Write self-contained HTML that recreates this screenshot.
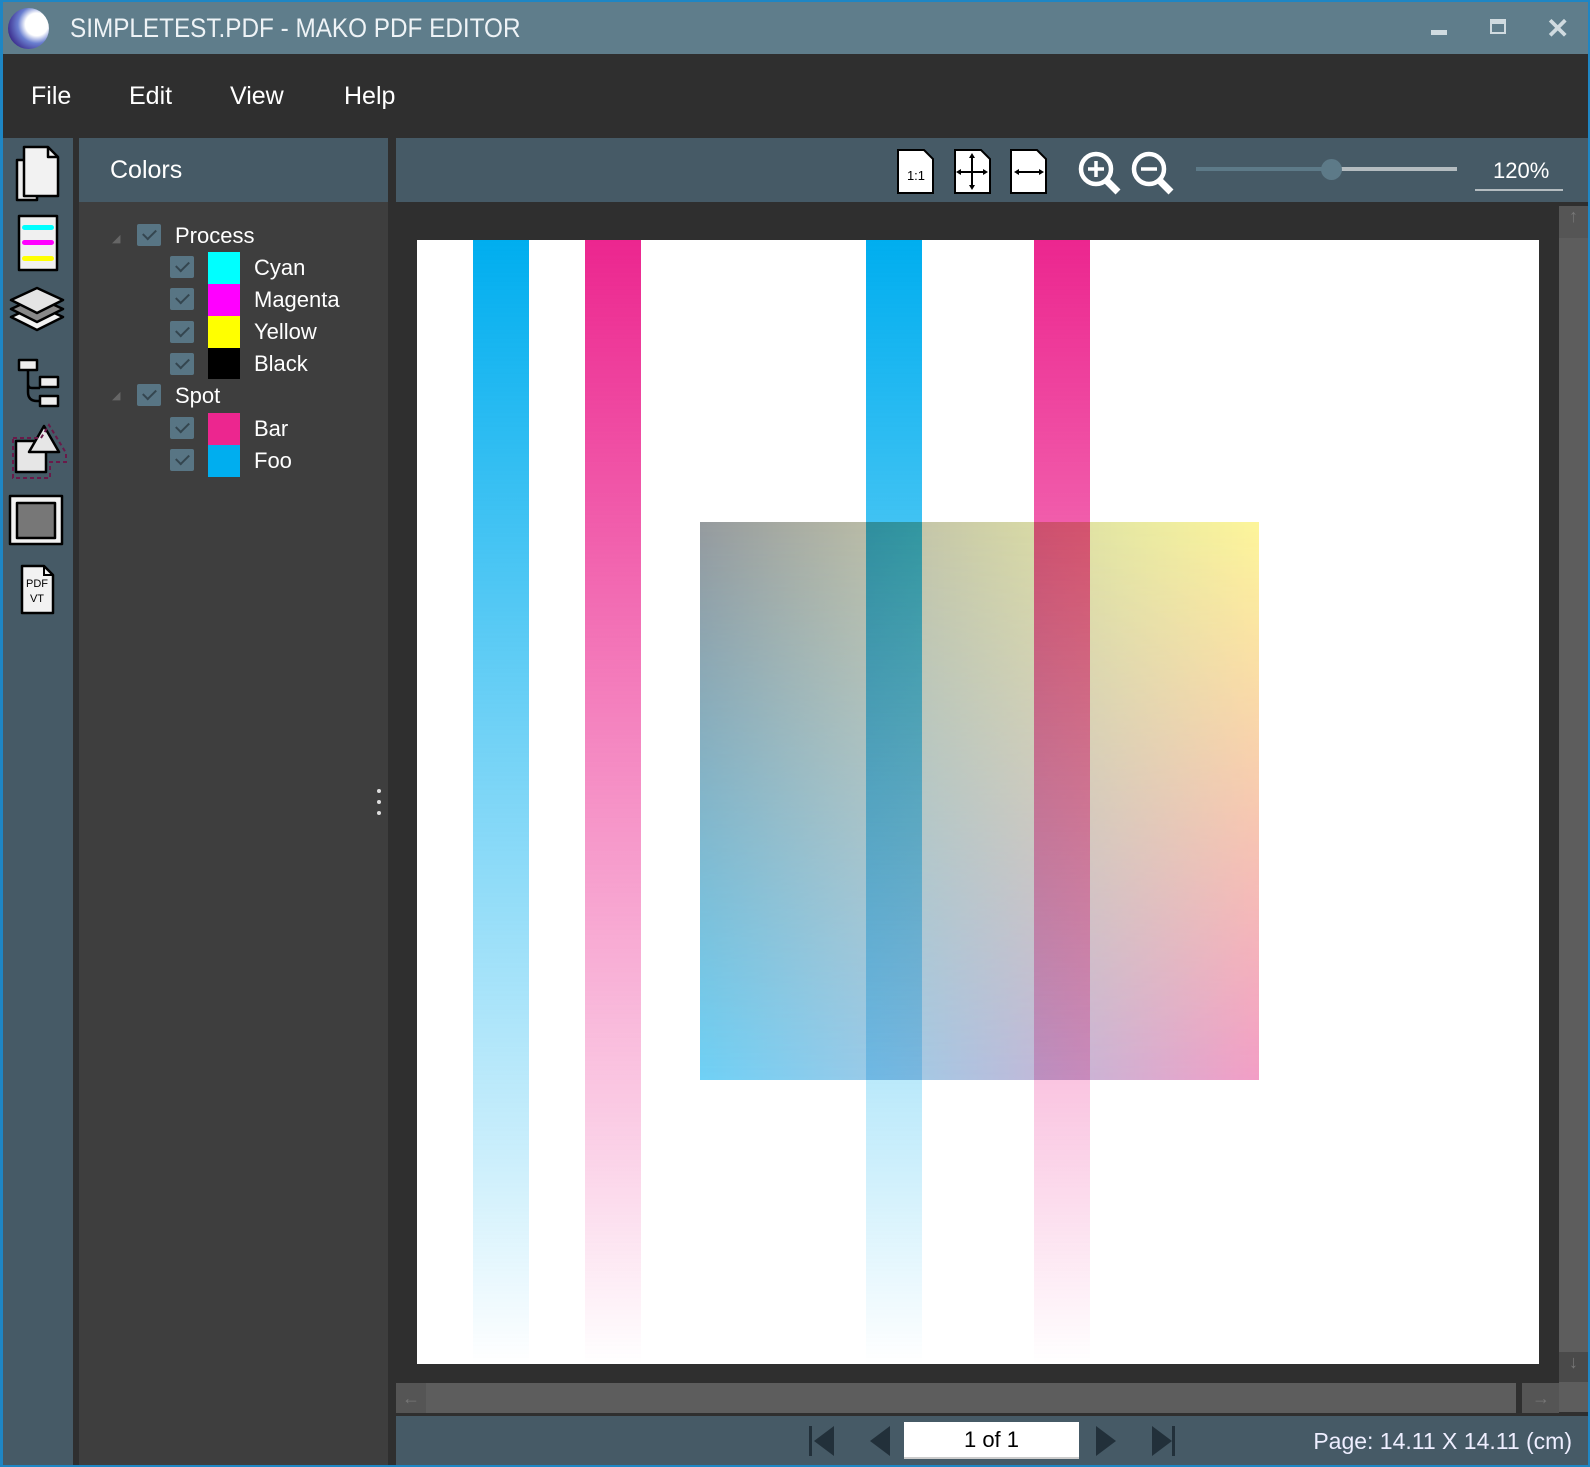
<!DOCTYPE html>
<html><head><meta charset="utf-8"><style>
*{margin:0;padding:0;box-sizing:border-box}
body{width:1590px;height:1467px;overflow:hidden;background:#2f2f2f;font-family:"Liberation Sans",sans-serif;position:relative}
.a{position:absolute}
.t{color:#fff;font-size:22px;white-space:nowrap}
.cb{position:absolute;width:24px;height:22px;background:#587584;border-radius:2px}
.cb:after{content:"";position:absolute;left:6px;width:11px;height:6px;border-left:2px solid #34464f;border-bottom:2px solid #34464f;transform:rotate(-45deg);transform-origin:center;top:5px}
.sw{position:absolute;left:208px;width:32px;height:32px}
</style></head><body>
<div class="a" style="left:0;top:0;width:1590px;height:2px;background:#1e86c4"></div>
<div class="a" style="left:0;top:0;width:3px;height:1467px;background:#1e86c4"></div>
<div class="a" style="right:0;top:0;width:2px;height:1467px;background:#1e86c4"></div>
<div class="a" style="left:0;bottom:0;width:1590px;height:2px;background:#1e86c4"></div>
<div class="a" style="left:3px;top:2px;width:1585px;height:52px;background:#5f7d8b"></div>
<div class="a" style="left:8px;top:8px;width:41px;height:41px;border-radius:50%;background:radial-gradient(circle at 70% 40%,#fff 0 30%,#6a7fd0 50%,#3a2a8a 80%,#5a4ab0)"></div>
<div class="a" style="left:70px;top:13px;color:#eef3f6;font-size:27px;white-space:nowrap;transform:scaleX(0.9);transform-origin:left">SIMPLETEST.PDF - MAKO PDF EDITOR</div>
<div class="a" style="left:1431px;top:30px;width:16px;height:5px;background:#d0dbe0"></div>
<div class="a" style="left:1490px;top:19px;width:16px;height:15px;border:2px solid #d0dbe0;border-top-width:5px"></div>
<div class="a" style="left:1546px;top:12px;color:#d0dbe0;font-size:28px;font-weight:bold">✕</div>
<div class="a t" style="left:31px;top:82px;font-size:25px">File</div>
<div class="a t" style="left:129px;top:82px;font-size:25px">Edit</div>
<div class="a t" style="left:230px;top:82px;font-size:25px">View</div>
<div class="a t" style="left:344px;top:82px;font-size:25px">Help</div>
<div class="a" style="left:3px;top:138px;width:70px;height:1327px;background:#465a66"></div>
<svg class="a" style="left:3px;top:138px" width="70" height="490" viewBox="3 138 70 490">
<g stroke="#000" stroke-width="2.5" stroke-linejoin="round">
<path d="M17 160 h20 v40 h-20z" fill="#eee"/>
<path d="M24 147 h24 l10 10 v39 h-34z" fill="#f2f2f2"/>
<path d="M48 147 v10 h10" fill="none"/>
<rect x="19" y="216" width="38" height="54" fill="#f0f0f0"/>
<path d="M37 305 l26 12 -26 13 -26 -13z" fill="#f2f2f2"/>
<path d="M37 297 l26 12 -26 13 -26 -13z" fill="#888"/>
<path d="M37 288 l26 12 -26 13 -26 -13z" fill="#e4e4e4"/>
<rect x="19" y="360" width="18" height="10" fill="#eee"/>
<rect x="40" y="377" width="18" height="10" fill="#eee"/>
<rect x="40" y="396" width="18" height="10" fill="#eee"/>
<path d="M28 370 v14 q0 4 4 4 h8 M28 384 v8 q0 9 9 9 h3" fill="none"/>
<rect x="16" y="441" width="30" height="31" fill="#e6e6e6"/>
<path d="M44 426 l15 26 h-30z" fill="#e6e6e6"/>
<rect x="10" y="496" width="52" height="48" fill="#f2f2f2"/>
<rect x="17" y="503" width="38" height="35" fill="#777"/>
<path d="M22 566 h22 l9 9 v38 h-31z" fill="#f2f2f2"/>
</g>
<g stroke="#000" stroke-width="2"><path d="M44 566 v9 h9" fill="none"/></g>
<rect x="22" y="225" width="32" height="5" rx="2.5" fill="#0ff"/>
<rect x="22" y="240" width="32" height="5" rx="2.5" fill="#f0f"/>
<rect x="22" y="256" width="32" height="5" rx="2.5" fill="#ff0"/>
<path d="M13 438 h28 l8 -13 l17 28 v9 h-16 v16 h-37z" fill="none" stroke="#6a1a4a" stroke-width="2" stroke-dasharray="4 3"/>
<text x="37" y="587" font-size="11" text-anchor="middle" font-family="Liberation Sans">PDF</text>
<text x="37" y="602" font-size="11" text-anchor="middle" font-family="Liberation Sans">VT</text>
</svg>
<div class="a" style="left:79px;top:138px;width:309px;height:1327px;background:#3e3e3e"></div>
<div class="a" style="left:79px;top:138px;width:309px;height:64px;background:#465a66"></div>
<div class="a t" style="left:110px;top:156px;font-size:25px">Colors</div>
<div class="a" style="left:112px;top:232px;color:#666;font-size:11px">◢</div>
<div class="a" style="left:112px;top:389px;color:#666;font-size:11px">◢</div>
<div class="cb" style="left:137px;top:224px"></div>
<div class="cb" style="left:137px;top:384px"></div>
<div class="cb" style="left:170px;top:256px"></div>
<div class="cb" style="left:170px;top:288px"></div>
<div class="cb" style="left:170px;top:321px"></div>
<div class="cb" style="left:170px;top:353px"></div>
<div class="cb" style="left:170px;top:417px"></div>
<div class="cb" style="left:170px;top:449px"></div>
<div class="sw" style="top:252px;background:#0ff"></div>
<div class="sw" style="top:284px;background:#f0f"></div>
<div class="sw" style="top:316px;background:#ff0"></div>
<div class="sw" style="top:348px;background:#000;height:31px"></div>
<div class="sw" style="top:413px;background:#ec268f"></div>
<div class="sw" style="top:445px;background:#00aeef"></div>
<div class="a t" style="left:175px;top:223px">Process</div>
<div class="a t" style="left:254px;top:255px">Cyan</div>
<div class="a t" style="left:254px;top:287px">Magenta</div>
<div class="a t" style="left:254px;top:319px">Yellow</div>
<div class="a t" style="left:254px;top:351px">Black</div>
<div class="a t" style="left:175px;top:383px">Spot</div>
<div class="a t" style="left:254px;top:416px">Bar</div>
<div class="a t" style="left:254px;top:448px">Foo</div>
<div class="a" style="left:377px;top:789px;width:4px;height:4px;border-radius:2px;background:#ddd;box-shadow:0 11px #ddd,0 22px #ddd"></div>
<div class="a" style="left:396px;top:138px;width:1192px;height:64px;background:#465a66"></div>
<svg class="a" style="left:890px;top:140px" width="300" height="60" viewBox="890 140 300 60">
<g stroke="#000" stroke-width="2" fill="#fff">
<path d="M898 150 h26 l9 9 v34 h-35z"/><path d="M955 150 h26 l9 9 v34 h-35z"/><path d="M1011 150 h26 l9 9 v34 h-35z"/>
</g>
<text x="916" y="180" font-size="13" text-anchor="middle" font-family="Liberation Sans">1:1</text>
<g stroke="#000" stroke-width="2" fill="none">
<path d="M972 155 v33 M958 172 h28"/><path d="M1016 172 h26"/>
</g>
<g fill="#000"><path d="M972 153 l-3 5 h6z M972 190 l-3 -5 h6z M956 172 l5 -3 v6z M988 172 l-5 -3 v6z M1014 172 l5 -3 v6z M1044 172 l-5 -3 v6z"/></g>
<g stroke="#fff" fill="none" stroke-width="4.5">
<circle cx="1096" cy="169" r="15"/><circle cx="1149" cy="169" r="15"/>
</g>
<g stroke="#fff" stroke-width="7"><path d="M1107 181 l11 11 M1160 181 l11 11"/></g>
<g stroke="#fff" stroke-width="3.5"><path d="M1088 169 h16 M1096 161 v16 M1141 169 h16"/></g>
</svg>
<div class="a" style="left:1196px;top:167px;width:136px;height:4px;background:#5d7a88"></div>
<div class="a" style="left:1332px;top:167px;width:125px;height:4px;background:#b4bcc0"></div>
<div class="a" style="left:1321px;top:159px;width:21px;height:21px;border-radius:50%;background:#5d7a88"></div>
<div class="a t" style="left:1493px;top:158px;font-size:22px">120%</div>
<div class="a" style="left:1475px;top:189px;width:88px;height:2px;background:#b4bcc0"></div>
<div class="a" style="left:417px;top:240px;width:1122px;height:1124px;background:#fff;overflow:hidden">
 <div class="a" style="left:283px;top:282px;width:559px;height:558px;background:linear-gradient(to right,#6fd1f6,#a6c8e4 40%,#f39ec6)"></div>
 <div class="a" style="left:283px;top:282px;width:559px;height:558px;background:linear-gradient(to right,#959a9e,#c5c6a8 40%,#e6e8a2 75%,#fdf59a);-webkit-mask-image:linear-gradient(to bottom,#000 0%,rgba(0,0,0,.5) 50%,rgba(0,0,0,0) 100%);mask-image:linear-gradient(to bottom,#000 0%,rgba(0,0,0,.5) 50%,rgba(0,0,0,0) 100%)"></div>
 <div class="a" style="left:56px;top:0;width:56px;height:1124px;mix-blend-mode:multiply;background:linear-gradient(#00aeef,rgba(0,174,239,.55) 45%,rgba(0,174,239,.2) 82%,rgba(0,174,239,0) 100%)"></div>
 <div class="a" style="left:168px;top:0;width:56px;height:1124px;mix-blend-mode:multiply;background:linear-gradient(#ec268f,rgba(236,38,143,.55) 45%,rgba(236,38,143,.2) 82%,rgba(236,38,143,0) 100%)"></div>
 <div class="a" style="left:449px;top:0;width:56px;height:1124px;mix-blend-mode:multiply;background:linear-gradient(#00aeef,rgba(0,174,239,.55) 45%,rgba(0,174,239,.2) 82%,rgba(0,174,239,0) 100%)"></div>
 <div class="a" style="left:617px;top:0;width:56px;height:1124px;mix-blend-mode:multiply;background:linear-gradient(#ec268f,rgba(236,38,143,.55) 45%,rgba(236,38,143,.2) 82%,rgba(236,38,143,0) 100%)"></div>
</div>
<div class="a" style="left:1559px;top:206px;width:29px;height:1206px;background:#5d5d5d"></div>
<div class="a" style="left:1559px;top:206px;width:29px;height:32px;background:#555;color:#777;font-size:18px;text-align:center">↑</div>
<div class="a" style="left:1559px;top:1352px;width:29px;height:30px;background:#4a4a4a;color:#777;font-size:18px;text-align:center">↓</div>
<div class="a" style="left:396px;top:1383px;width:1120px;height:30px;background:#5d5d5d"></div>
<div class="a" style="left:396px;top:1383px;width:30px;height:30px;background:#555;color:#777;font-size:18px;text-align:center;line-height:30px">←</div>
<div class="a" style="left:1522px;top:1383px;width:37px;height:30px;background:#555;color:#777;font-size:18px;line-height:30px;padding-left:10px">→</div>
<div class="a" style="left:396px;top:1416px;width:1192px;height:49px;background:#465a66"></div>
<div class="a" style="left:809px;top:1426px;width:3px;height:30px;background:#22303a"></div>
<svg class="a" style="left:810px;top:1424px" width="370" height="36" viewBox="810 1424 370 36">
<g fill="#22303a"><path d="M834 1426 l-20 15 20 15z M890 1426 l-20 15 20 15z M1096 1426 l20 15 -20 15z M1152 1426 l20 15 -20 15z"/><rect x="1172" y="1426" width="3" height="30"/></g>
</svg>
<div class="a" style="left:904px;top:1422px;width:175px;height:37px;background:#fff;border-bottom:2px solid #ccc;text-align:center;font-size:22px;line-height:36px;color:#000">1 of 1</div>
<div class="a t" style="right:18px;top:1428px;font-size:23px;color:#eef">Page: 14.11 X 14.11 (cm)</div>
</body></html>
